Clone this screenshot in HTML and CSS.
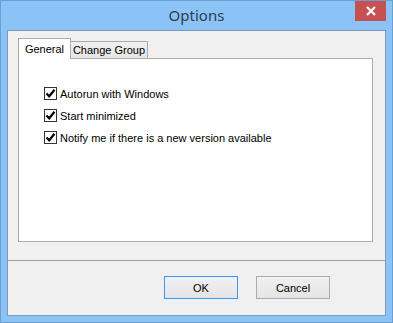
FILE: index.html
```html
<!DOCTYPE html>
<html lang="en">
<head>
  <meta charset="UTF-8">
  <title>Options</title>
  <link rel="stylesheet" href="styles.css">
</head>
<body>

  <!-- Dialog Window -->
  <div class="window">

    <!-- Title Bar -->
    <div class="titlebar">
      <span class="title">Options</span>
      <button class="close-btn" aria-label="Close">
        <svg width="10" height="10" viewBox="0 0 10 10">
          <path d="M1 1 L9 9 M9 1 L1 9" stroke="#fff" stroke-width="2.2"/>
        </svg>
      </button>
    </div>

    <!-- Client Area -->
    <div class="client">
      <div class="tab-area">
        <div class="tabs">
          <div class="tab active">General</div>
          <div class="tab">Change Group</div>
        </div>
        <div class="tab-panel">
          <label class="check-row"><span class="checkbox"><svg width="11" height="11" viewBox="0 0 11 11"><path d="M1.5 5.5 L4.2 8.3 L9.5 1.8" fill="none" stroke="#000" stroke-width="2.2"/></svg></span>Autorun with Windows</label>
          <label class="check-row"><span class="checkbox"><svg width="11" height="11" viewBox="0 0 11 11"><path d="M1.5 5.5 L4.2 8.3 L9.5 1.8" fill="none" stroke="#000" stroke-width="2.2"/></svg></span>Start minimized</label>
          <label class="check-row"><span class="checkbox"><svg width="11" height="11" viewBox="0 0 11 11"><path d="M1.5 5.5 L4.2 8.3 L9.5 1.8" fill="none" stroke="#000" stroke-width="2.2"/></svg></span>Notify me if there is a new version available</label>
        </div>
      </div>

      <!-- Buttons -->
      <div class="button-bar">
        <button class="button default">OK</button>
        <button class="button">Cancel</button>
      </div>
    </div>

  </div>

</body>
</html>
```

FILE: styles.css
```css
body {
  margin: 0;
  padding: 0;
  font-family: 'Liberation Sans', Arial, sans-serif;
  font-size: 11px;
  color: #000;
}

.window {
  box-sizing: border-box;
  width: 393px;
  height: 323px;
  border: 1px solid #6d9ed2;
  background-color: #8cc3f6;
  padding: 0 6px 6px;
  display: flex;
  flex-direction: column;
}

.titlebar {
  position: relative;
  height: 29px;
  display: flex;
  align-items: center;
  justify-content: center;
}

.title {
  font-family: 'Noto Sans', sans-serif;
  font-size: 15px;
  color: #2b3d52;
  padding-bottom: 1px;
}

.close-btn {
  position: absolute;
  top: 0;
  right: 0;
  width: 31px;
  height: 20px;
  border: none;
  padding: 0;
  background-color: #c75050;
  display: flex;
  align-items: center;
  justify-content: center;
}

.client {
  flex: 1;
  border: 1px solid #7d9cbd;
  background-color: #f0f0f0;
  display: flex;
  flex-direction: column;
}

.tab-area {
  height: 230px;
  border-bottom: 1px solid #a0a0a0;
  padding: 7px 12px 0 10px;
  box-sizing: border-box;
}

.tabs {
  display: flex;
  align-items: flex-end;
  height: 20px;
}

.tab {
  box-sizing: border-box;
  height: 17px;
  border: 1px solid #acacac;
  border-bottom: none;
  background: linear-gradient(#f0f0f0, #e5e5e5);
  line-height: 17px;
  white-space: nowrap;
  text-align: center;
}

.tab.active {
  height: 21px;
  width: 53px;
  margin-bottom: -1px;
  background: #fff;
  line-height: 20px;
  position: relative;
  z-index: 1;
}

.tab.active + .tab {
  border-left: none;
  width: 77px;
}

.tab-panel {
  box-sizing: border-box;
  height: 184px;
  border: 1px solid #acacac;
  background-color: #fff;
  padding: 28px 0 0 25px;
  display: flex;
  flex-direction: column;
  gap: 9px;
}

.check-row {
  display: flex;
  align-items: center;
  height: 13px;
  gap: 3px;
}

.checkbox {
  box-sizing: border-box;
  width: 13px;
  height: 13px;
  border: 1px solid #333;
  background: #fff;
  display: flex;
  align-items: center;
  justify-content: center;
}

.button-bar {
  flex: 1;
  display: flex;
  justify-content: flex-end;
  gap: 18px;
  padding: 15px 55px 0 0;
}

.button {
  box-sizing: border-box;
  width: 74px;
  height: 23px;
  border: 1px solid #acacac;
  background: linear-gradient(#f0f0f0, #e5e5e5);
  font-family: 'Liberation Sans', Arial, sans-serif;
  font-size: 11px;
  color: #000;
  padding: 0;
}

.button.default {
  border: 1px solid #3399ff;
}
```
